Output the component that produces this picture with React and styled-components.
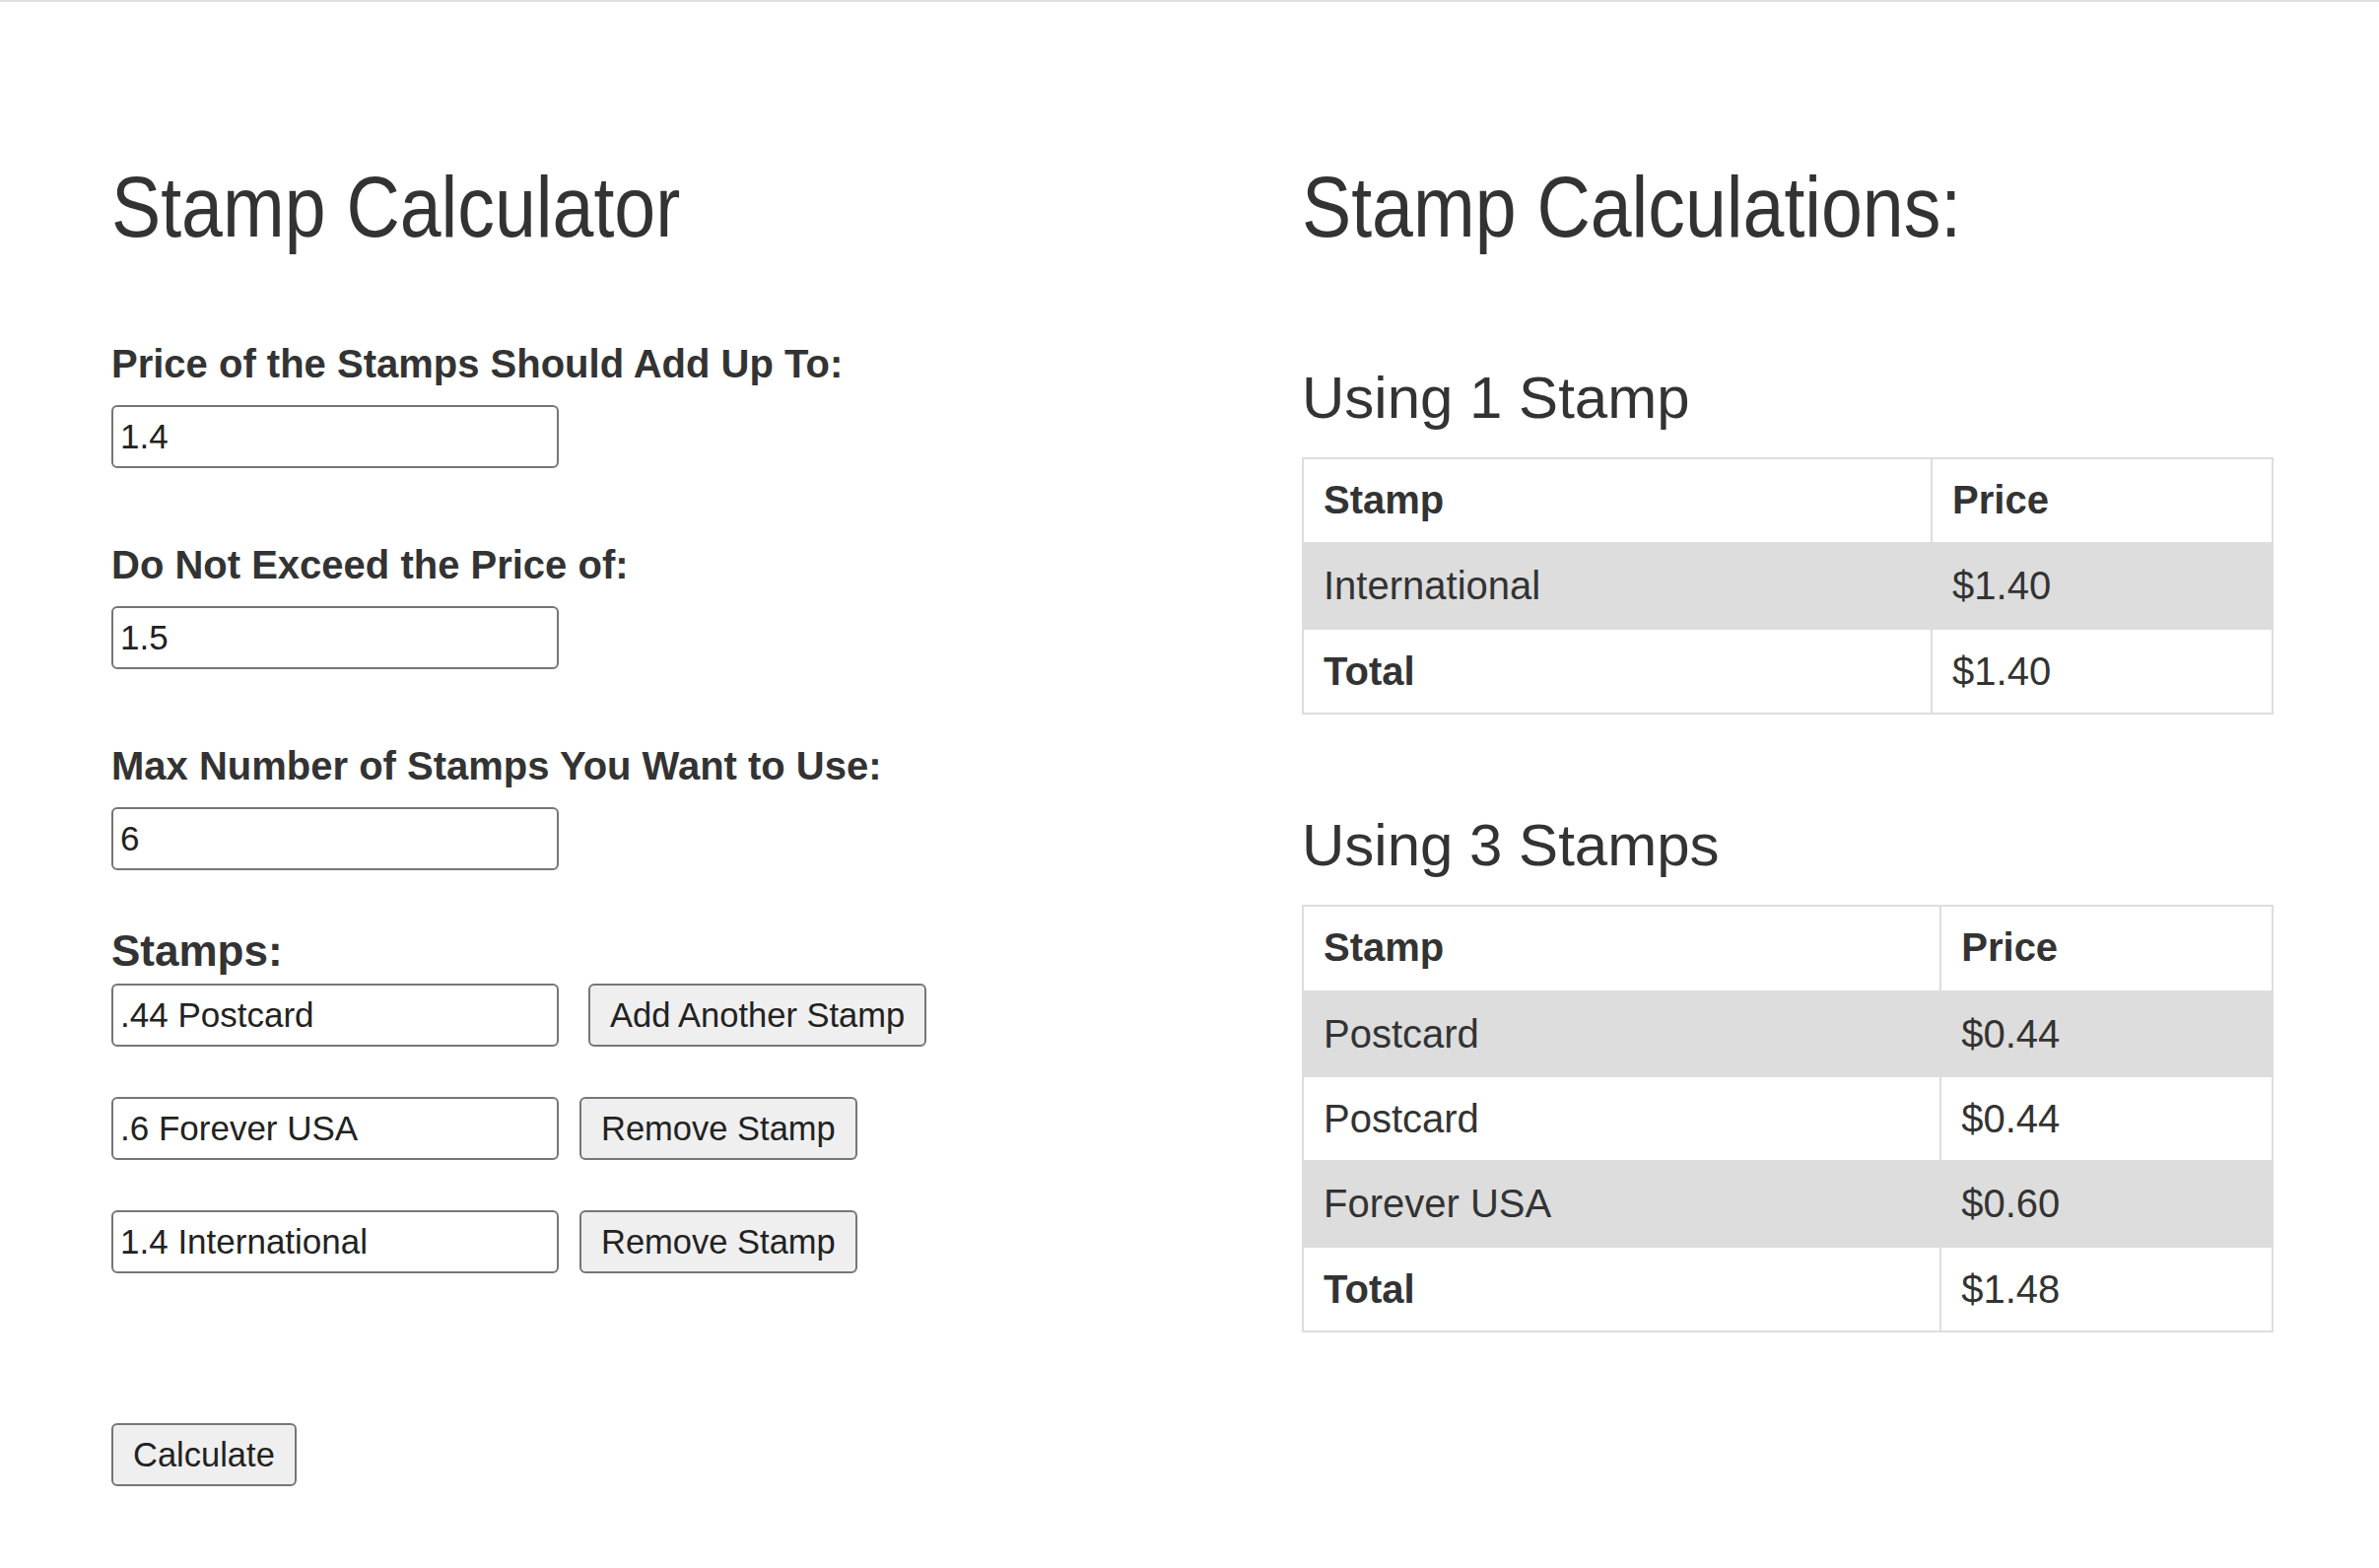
import React, { useState } from "react";
import styled, { createGlobalStyle } from "styled-components";

const GlobalStyle = createGlobalStyle`
  html, body {
    margin: 0;
    padding: 0;
    background: #ffffff;
  }
  body {
    font-family: "Liberation Sans", Arial, Helvetica, sans-serif;
    color: #333333;
  }
  * { box-sizing: border-box; }
`;

const Page = styled.div`
  border-top: 2px solid #e0e0e0;
  min-height: 1591px;
  display: flex;
  align-items: flex-start;
  padding-left: 113px;
`;

const FormColumn = styled.div`
  width: 1208px;
  padding-top: 164px;
  display: flex;
  flex-direction: column;
  align-items: flex-start;
`;

const ResultsColumn = styled.div`
  width: 986px;
  padding-top: 164px;
  display: flex;
  flex-direction: column;
  align-items: stretch;
`;

const Title = styled.h1`
  margin: 0;
  align-self: flex-start;
  font-family: "Liberation Sans", Arial, sans-serif;
  font-weight: 400;
  font-size: 87px;
  line-height: 87px;
  color: #333333;
  white-space: nowrap;
  transform: scaleX(0.865);
  transform-origin: left center;
`;

const FieldGroup = styled.div`
  margin-top: ${(p) => p.$top}px;
  display: flex;
  flex-direction: column;
  align-items: flex-start;
`;

const Label = styled.label`
  display: block;
  font-weight: 700;
  font-size: 40px;
  line-height: 40px;
  color: #333333;
  margin-bottom: 22px;
  white-space: nowrap;
`;

const StampsHeading = styled.div`
  margin-top: 60px;
  font-weight: 700;
  font-size: 44px;
  line-height: 44px;
  color: #333333;
`;

const TextInput = styled.input`
  width: 454px;
  height: 64px;
  padding: 0 7px;
  border: 2px solid #767676;
  border-radius: 6px;
  background: #ffffff;
  font-family: "Liberation Sans", Arial, sans-serif;
  font-size: 35px;
  color: #222222;
  outline: none;
`;

const StampRow = styled.div`
  margin-top: ${(p) => p.$top}px;
  display: flex;
  align-items: center;
  gap: ${(p) => p.$gap}px;
`;

const Button = styled.button`
  height: 64px;
  padding: 0 20px;
  border: 2px solid #767676;
  border-radius: 6px;
  background: #efefef;
  font-family: "Liberation Sans", Arial, sans-serif;
  font-size: 34.5px;
  color: #222222;
  white-space: nowrap;
  cursor: pointer;
`;

const CalculateButton = styled(Button)`
  margin-top: 152px;
`;

const SubTitle = styled.h3`
  margin: ${(p) => p.$top}px 0 30px 0;
  font-weight: 400;
  font-size: 60px;
  line-height: 60px;
  color: #333333;
  white-space: nowrap;
`;

const Table = styled.table`
  width: 100%;
  border-collapse: collapse;
  border: 2px solid #dddddd;
  font-size: 40px;
  color: #333333;
`;

const Cell = styled.td`
  border: 2px solid #dddddd;
  padding: 19px 20px;
  line-height: 46.4px;
  text-align: left;
  font-weight: ${(p) => (p.$bold ? 700 : 400)};
  white-space: nowrap;
`;

const HeadCell = styled.th`
  border: 2px solid #dddddd;
  padding: 18px 20px 20px 20px;
  line-height: 46.4px;
  text-align: left;
  font-weight: 700;
  white-space: nowrap;
`;

const Row = styled.tr`
  background: ${(p) => (p.$striped ? "#dddddd" : "#ffffff")};
`;

const results = [
  {
    title: "Using 1 Stamp",
    top: 121,
    items: [{ name: "International", price: "$1.40" }],
    total: "$1.40",
  },
  {
    title: "Using 3 Stamps",
    top: 103,
    items: [
      { name: "Postcard", price: "$0.44" },
      { name: "Postcard", price: "$0.44" },
      { name: "Forever USA", price: "$0.60" },
    ],
    total: "$1.48",
  },
];

function ResultTable({ result }) {
  return (
    <>
      <SubTitle $top={result.top}>{result.title}</SubTitle>
      <Table>
        <thead>
          <Row>
            <HeadCell>Stamp</HeadCell>
            <HeadCell>Price</HeadCell>
          </Row>
        </thead>
        <tbody>
          {result.items.map((it, i) => (
            <Row key={i} $striped={i % 2 === 0}>
              <Cell>{it.name}</Cell>
              <Cell>{it.price}</Cell>
            </Row>
          ))}
          <Row $striped={result.items.length % 2 === 0}>
            <Cell $bold>Total</Cell>
            <Cell>{result.total}</Cell>
          </Row>
        </tbody>
      </Table>
    </>
  );
}

export default function App() {
  const [target, setTarget] = useState("1.4");
  const [max, setMax] = useState("1.5");
  const [count, setCount] = useState("6");
  const [stamps, setStamps] = useState([".44 Postcard", ".6 Forever USA", "1.4 International"]);

  const updateStamp = (i, v) => setStamps((s) => s.map((x, j) => (j === i ? v : x)));

  return (
    <>
      <GlobalStyle />
      <Page>
        <FormColumn>
          <Title>Stamp Calculator</Title>

          <FieldGroup $top={96}>
            <Label>Price of the Stamps Should Add Up To:</Label>
            <TextInput value={target} onChange={(e) => setTarget(e.target.value)} />
          </FieldGroup>

          <FieldGroup $top={78}>
            <Label>Do Not Exceed the Price of:</Label>
            <TextInput value={max} onChange={(e) => setMax(e.target.value)} />
          </FieldGroup>

          <FieldGroup $top={78}>
            <Label>Max Number of Stamps You Want to Use:</Label>
            <TextInput value={count} onChange={(e) => setCount(e.target.value)} />
          </FieldGroup>

          <StampsHeading>Stamps:</StampsHeading>

          {stamps.map((s, i) => (
            <StampRow key={i} $top={i === 0 ? 11 : 51} $gap={i === 0 ? 30 : 21}>
              <TextInput value={s} onChange={(e) => updateStamp(i, e.target.value)} />
              <Button type="button">{i === 0 ? "Add Another Stamp" : "Remove Stamp"}</Button>
            </StampRow>
          ))}

          <CalculateButton type="button">Calculate</CalculateButton>
        </FormColumn>

        <ResultsColumn>
          <Title>Stamp Calculations:</Title>
          {results.map((r) => (
            <ResultTable key={r.title} result={r} />
          ))}
        </ResultsColumn>
      </Page>
    </>
  );
}
